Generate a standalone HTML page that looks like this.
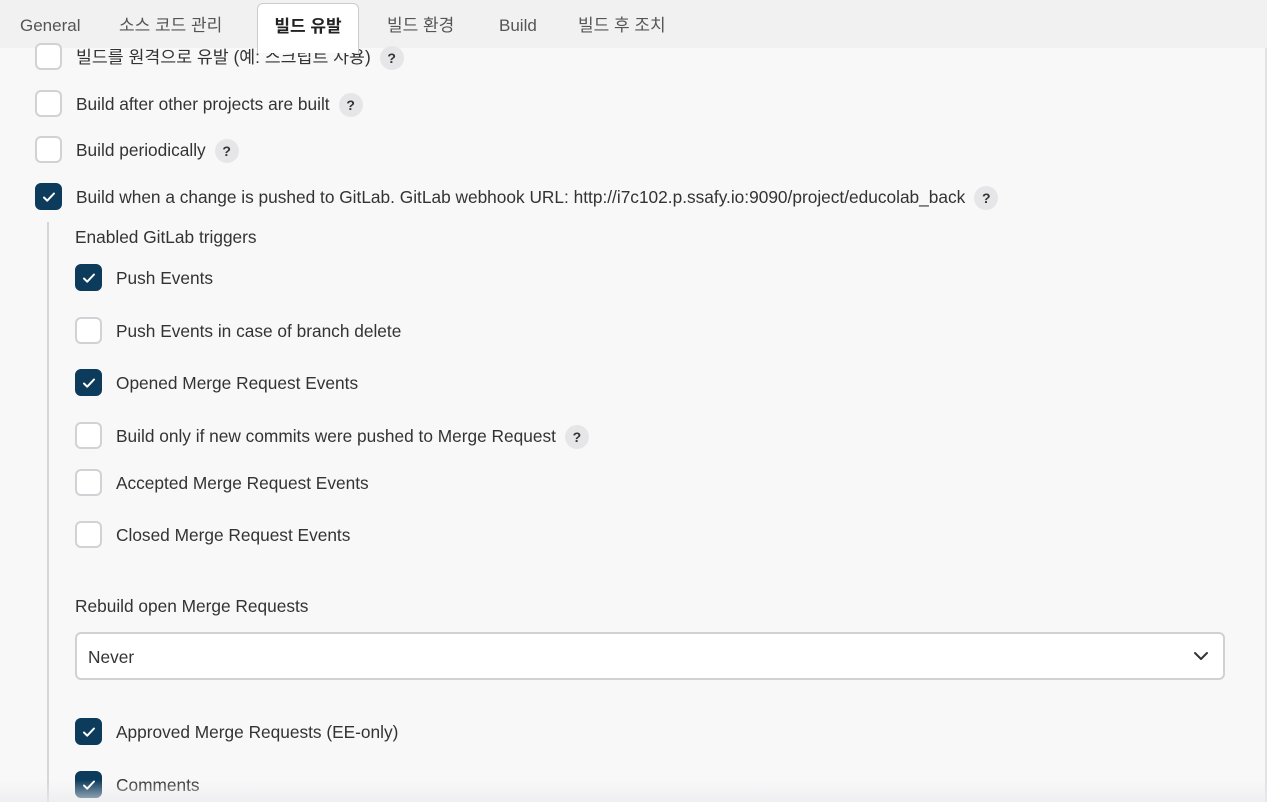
<!DOCTYPE html>
<html><head><meta charset="utf-8"><style>
*{box-sizing:border-box;margin:0;padding:0}
html,body{width:1267px;height:802px;overflow:hidden}
body{background:#f8f8f9;font-family:"Liberation Sans","Noto Sans CJK KR",sans-serif;color:#333;position:relative;font-size:17px}
.tabs{position:absolute;left:0;top:0;width:1267px;height:48px;background:#f1f1f2}
.tab{position:absolute;top:15px;font-size:17px;line-height:22px;height:22px;color:#555}
.active{position:absolute;left:257px;top:3px;width:102px;height:50px;background:#fff;border:1px solid #ccc;border-bottom:none;border-radius:6px 6px 0 0;font-weight:bold;color:#222;text-align:center;padding-top:12px;font-size:17px;line-height:22px;z-index:2}
.cb{position:absolute;width:27px;height:27px;border:2px solid #d0d2d6;border-radius:6px;background:#fff}
.cb.on{background:#0d3b5c;border-color:#0d3b5c}
.cb.on svg{position:absolute;left:5px;top:5px}
.lbl{position:absolute;font-size:17.3px;line-height:22px;color:#333;white-space:nowrap}
.q{display:inline-block;width:24px;height:24px;border-radius:12px;background:#e6e6e8;font-weight:bold;font-size:14px;text-align:center;line-height:24px;margin-left:9px;vertical-align:middle;color:#333}
.vline{position:absolute;left:47px;top:222px;width:2px;height:580px;background:#d4d6da}
.sel{position:absolute;left:75px;top:632px;width:1150px;height:48px;border:2px solid #cfd1d4;border-radius:6px;background:#fff;padding:14px 11px;font-size:17.3px;line-height:18px}
.rb{position:absolute;right:0;top:48px;width:2px;height:754px;background:#e2e2e4}
.shadow{position:absolute;left:0;top:780px;width:1267px;height:22px;background:linear-gradient(rgba(235,235,238,0),rgba(235,235,238,0.7))}
</style></head><body>
<div class="tabs">
<span class="tab" style="left:20px">General</span>
<span class="tab" style="left:119px">소스 코드 관리</span>
<span class="tab" style="left:387px">빌드 환경</span>
<span class="tab" style="left:499px">Build</span>
<span class="tab" style="left:578px">빌드 후 조치</span>
</div>
<div class="active">빌드 유발</div>
<div class="rb"></div>

<div class="cb" style="left:35px;top:43px;"></div>
<div class="lbl" style="left:76px;top:46px">빌드를 원격으로 유발 (예: 스크립트 사용)<span class="q">?</span></div>

<div class="cb" style="left:35px;top:90px"></div>
<div class="lbl" style="left:76px;top:93px">Build after other projects are built<span class="q">?</span></div>

<div class="cb" style="left:35px;top:136px"></div>
<div class="lbl" style="left:76px;top:139px">Build periodically<span class="q">?</span></div>

<div class="cb on" style="left:35px;top:183px"><svg width="14" height="14" viewBox="0 0 14 14"><path d="M2 7.5l3.2 3.2L12 3.5" stroke="#fff" stroke-width="2" fill="none" stroke-linecap="round" stroke-linejoin="round"/></svg></div>
<div class="lbl" style="left:76px;top:186px">Build when a change is pushed to GitLab. GitLab webhook URL: http://i7c102.p.ssafy.io:9090/project/educolab_back<span class="q">?</span></div>

<div class="vline"></div>
<div class="lbl" style="left:75px;top:226px">Enabled GitLab triggers</div>

<div class="cb on" style="left:75px;top:264px"><svg width="14" height="14" viewBox="0 0 14 14"><path d="M2 7.5l3.2 3.2L12 3.5" stroke="#fff" stroke-width="2" fill="none" stroke-linecap="round" stroke-linejoin="round"/></svg></div>
<div class="lbl" style="left:116px;top:267px">Push Events</div>

<div class="cb" style="left:75px;top:317px"></div>
<div class="lbl" style="left:116px;top:320px">Push Events in case of branch delete</div>

<div class="cb on" style="left:75px;top:369px"><svg width="14" height="14" viewBox="0 0 14 14"><path d="M2 7.5l3.2 3.2L12 3.5" stroke="#fff" stroke-width="2" fill="none" stroke-linecap="round" stroke-linejoin="round"/></svg></div>
<div class="lbl" style="left:116px;top:372px">Opened Merge Request Events</div>

<div class="cb" style="left:75px;top:422px"></div>
<div class="lbl" style="left:116px;top:425px">Build only if new commits were pushed to Merge Request<span class="q">?</span></div>

<div class="cb" style="left:75px;top:469px"></div>
<div class="lbl" style="left:116px;top:472px">Accepted Merge Request Events</div>

<div class="cb" style="left:75px;top:521px"></div>
<div class="lbl" style="left:116px;top:524px">Closed Merge Request Events</div>

<div class="lbl" style="left:75px;top:595px">Rebuild open Merge Requests</div>
<div class="sel">Never<svg style="position:absolute;right:14px;top:17px" width="16" height="10" viewBox="0 0 16 10"><path d="M2 2l6 6 6-6" stroke="#333" stroke-width="2" fill="none" stroke-linecap="round" stroke-linejoin="round"/></svg></div>

<div class="cb on" style="left:75px;top:718px"><svg width="14" height="14" viewBox="0 0 14 14"><path d="M2 7.5l3.2 3.2L12 3.5" stroke="#fff" stroke-width="2" fill="none" stroke-linecap="round" stroke-linejoin="round"/></svg></div>
<div class="lbl" style="left:116px;top:721px">Approved Merge Requests (EE-only)</div>

<div class="cb on" style="left:75px;top:771px"><svg width="14" height="14" viewBox="0 0 14 14"><path d="M2 7.5l3.2 3.2L12 3.5" stroke="#fff" stroke-width="2" fill="none" stroke-linecap="round" stroke-linejoin="round"/></svg></div>
<div class="lbl" style="left:116px;top:774px">Comments</div>
<div class="shadow"></div>
</body></html>
